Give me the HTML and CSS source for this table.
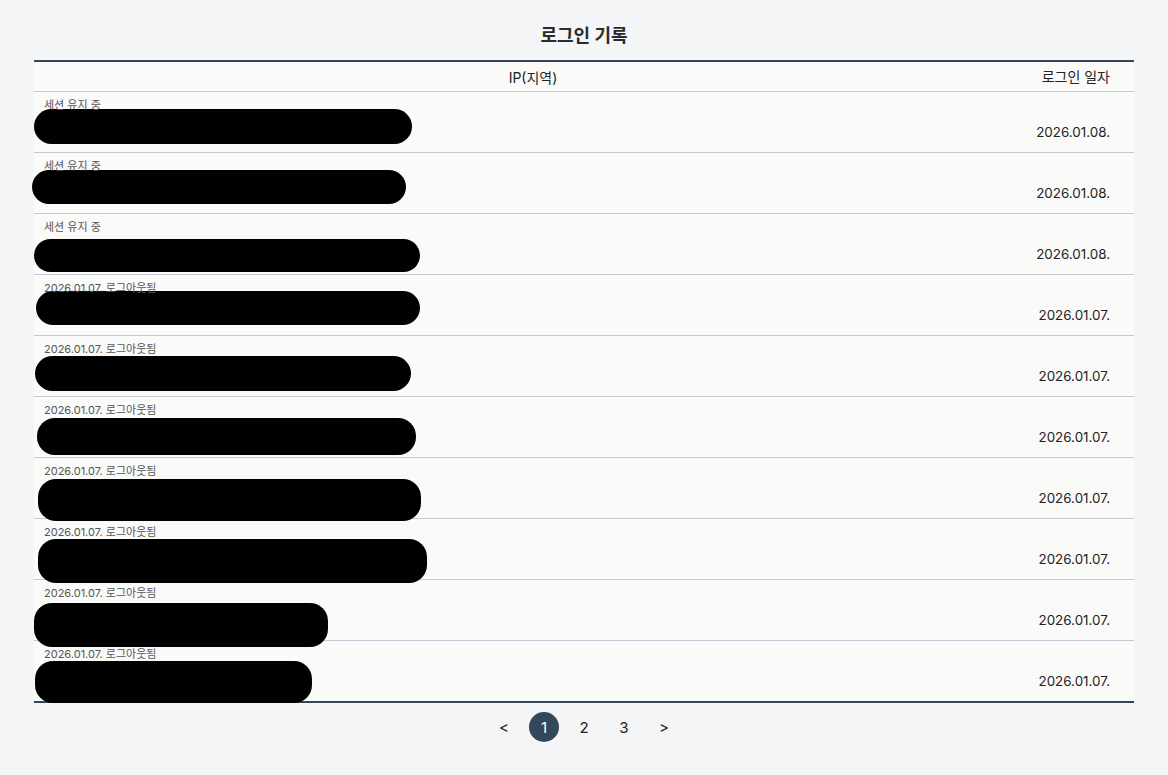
FILE: index.html
```html
<!DOCTYPE html>
<html lang="ko">
<head>
<meta charset="utf-8">
<title>로그인 기록</title>
<link rel="stylesheet" href="styles.css">
</head>
<body>
<main class="page">
  <h1 class="title">로그인 기록</h1>
  <section class="log">
    <div class="row head"><div class="c-ip">IP(지역)</div><div class="c-date">로그인 일자</div></div>
    <div class="row"><div class="c-ip"><div class="label">세션 유지 중</div><div class="mask" style="width:378px;height:35px;margin-top:-3px"></div></div><div class="c-date">2026.01.08.</div></div>
    <div class="row"><div class="c-ip"><div class="label">세션 유지 중</div><div class="mask" style="width:374px;height:34px;margin-top:-3px;margin-left:-12px"></div></div><div class="c-date">2026.01.08.</div></div>
    <div class="row"><div class="c-ip"><div class="label">세션 유지 중</div><div class="mask" style="width:386px;height:33px;margin-top:5px"></div></div><div class="c-date">2026.01.08.</div></div>
    <div class="row"><div class="c-ip"><div class="label">2026.01.07. 로그아웃됨</div><div class="mask" style="width:384px;height:34px;margin-top:-4px;margin-left:-8px"></div></div><div class="c-date">2026.01.07.</div></div>
    <div class="row"><div class="c-ip"><div class="label">2026.01.07. 로그아웃됨</div><div class="mask" style="width:376px;height:35px;margin-top:0;margin-left:-9px"></div></div><div class="c-date">2026.01.07.</div></div>
    <div class="row"><div class="c-ip"><div class="label">2026.01.07. 로그아웃됨</div><div class="mask" style="width:379px;height:37px;margin-top:1px;margin-left:-7px"></div></div><div class="c-date">2026.01.07.</div></div>
    <div class="row"><div class="c-ip"><div class="label">2026.01.07. 로그아웃됨</div><div class="mask" style="width:383px;height:42px;margin-top:1px;margin-left:-6px"></div></div><div class="c-date">2026.01.07.</div></div>
    <div class="row"><div class="c-ip"><div class="label">2026.01.07. 로그아웃됨</div><div class="mask" style="width:389px;height:44px;margin-top:0;margin-left:-6px"></div></div><div class="c-date">2026.01.07.</div></div>
    <div class="row"><div class="c-ip"><div class="label">2026.01.07. 로그아웃됨</div><div class="mask" style="width:294px;height:44px;margin-top:3px"></div></div><div class="c-date">2026.01.07.</div></div>
    <div class="row"><div class="c-ip"><div class="label">2026.01.07. 로그아웃됨</div><div class="mask" style="width:277px;height:42px;margin-top:0;margin-left:-9px"></div></div><div class="c-date">2026.01.07.</div></div>
  </section>
  <nav class="pager">
    <span class="pg">&lt;</span>
    <span class="pg active">1</span>
    <span class="pg">2</span>
    <span class="pg">3</span>
    <span class="pg">&gt;</span>
  </nav>
</main>
</body>
</html>
```

FILE: styles.css
```css
html, body {
  margin: 0;
  padding: 0;
  background: #f4f5f7;
  font-family: Inter, "Noto Sans CJK KR", "Noto Sans", sans-serif;
  color: #222;
}

.page {
  width: 1100px;
  margin: 0 auto;
  padding-top: 23px;
}

.title {
  margin: 0 0 11px;
  font-size: 18px;
  line-height: 26px;
  font-weight: 700;
  text-align: center;
  color: #2b2b2b;
}

.log {
  background: #fafaf9;
  border-top: 2px solid #344558;
  border-bottom: 2px solid #344558;
}

.row {
  display: flex;
  height: 61px;
  box-sizing: border-box;
  border-bottom: 1px solid #c3c8d4;
}

.row:last-child {
  border-bottom: none;
  height: 60px;
}

.row.head {
  height: 30px;
  align-items: center;
  font-size: 14px;
  color: #222;
}

.c-ip {
  flex: 1;
  min-width: 0;
  padding: 6px 10px 0;
}

.head .c-ip {
  padding: 0;
  text-align: center;
}

.c-date {
  width: 78px;
  padding-right: 24px;
  text-align: right;
  align-self: flex-end;
  padding-bottom: 10px;
  font-size: 13.4px;
  line-height: 20px;
  color: #222;
  white-space: nowrap;
}

.head .c-date {
  align-self: center;
  padding-bottom: 0;
  font-size: 14px;
}

.label {
  font-size: 11px;
  line-height: 14px;
  color: #555;
}

.mask {
  background: #000;
  border-radius: 18px;
  margin-left: -10px;
}

.pager {
  display: flex;
  justify-content: center;
  gap: 10px;
  margin-top: 9px;
}

.pg {
  width: 30px;
  height: 30px;
  display: flex;
  align-items: center;
  justify-content: center;
  font-size: 15px;
  color: #222;
  border-radius: 50%;
}

.pg.active {
  background: #34475b;
  color: #fff;
}
```
